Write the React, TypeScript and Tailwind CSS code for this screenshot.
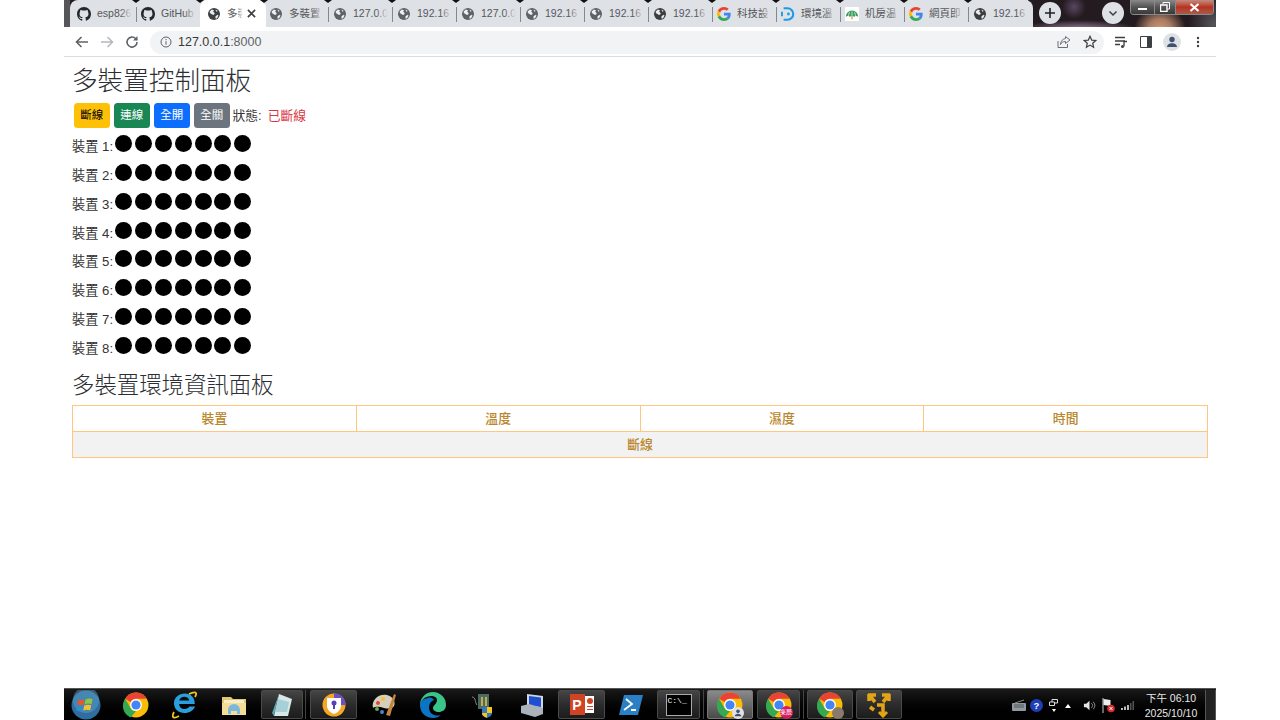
import React from "react";

const FONT = "font-['Liberation_Sans','Noto_Sans_CJK_TC',sans-serif]";

function Globe({ dark = false }: { dark?: boolean }) {
  const c = dark ? "#3c4043" : "#5f6368";
  return (
    <svg width="12" height="12" viewBox="0 0 16 16" className="shrink-0">
      <circle cx="8" cy="8" r="8" fill={c} />
      <path d="M2 5l3-3 3 1-1 2 2 2-1 2H6L3 7zM10 11l3-2 1 1-2 4-2 0zM10 2l3 2-2 1z" fill="#fff" fillOpacity="0.9" />
    </svg>
  );
}

function Github() {
  return (
    <svg width="14" height="14" viewBox="0 0 16 16" className="shrink-0" fill="#24292f">
      <path d="M8 0C3.58 0 0 3.58 0 8c0 3.54 2.29 6.53 5.47 7.59.4.07.55-.17.55-.38 0-.19-.01-.82-.01-1.49-2.01.37-2.53-.49-2.69-.94-.09-.23-.48-.94-.82-1.13-.28-.15-.68-.52-.01-.53.63-.01 1.08.58 1.23.82.72 1.21 1.87.87 2.33.66.07-.52.28-.87.51-1.07-1.78-.2-3.64-.89-3.64-3.95 0-.87.31-1.59.82-2.15-.08-.2-.36-1.02.08-2.12 0 0 .67-.21 2.2.82.64-.18 1.32-.27 2-.27s1.36.09 2 .27c1.53-1.04 2.2-.82 2.2-.82.44 1.1.16 1.92.08 2.12.51.56.82 1.27.82 2.15 0 3.07-1.87 3.75-3.65 3.95.29.25.54.73.54 1.48 0 1.07-.01 1.93-.01 2.2 0 .21.15.46.55.38A8.01 8.01 0 0 0 16 8c0-4.42-3.58-8-8-8z" />
    </svg>
  );
}

function GoogleG() {
  return (
    <svg width="14" height="14" viewBox="0 0 48 48" className="shrink-0">
      <path fill="#EA4335" d="M24 9.5c3.5 0 6.7 1.2 9.2 3.6l6.9-6.9C35.9 2.4 30.5 0 24 0 14.6 0 6.5 5.4 2.6 13.2l8 6.2C12.5 13.7 17.8 9.5 24 9.5z" />
      <path fill="#4285F4" d="M47 24.5c0-1.6-.1-3.1-.4-4.5H24v9h12.900c-.6 3-2.200 5.500-4.800 7.200l7.700 6c4.500-4.200 7.200-10.300 7.200-17.700z" />
      <path fill="#FBBC05" d="M10.600 28.600c-.5-1.400-.8-3-.8-4.600s.3-3.200.8-4.600l-8-6.200C.9 16.500 0 20.100 0 24s.9 7.500 2.600 10.800z" />
      <path fill="#34A853" d="M24 48c6.500 0 11.900-2.100 15.900-5.800l-7.700-6c-2.200 1.500-4.900 2.300-8.200 2.300-6.200 0-11.500-4.200-13.400-9.900l-8 6.200C6.500 42.600 14.600 48 24 48z" />
    </svg>
  );
}

function DLogo() {
  return (
    <svg width="14" height="14" viewBox="0 0 16 16" className="shrink-0" fill="none">
      <path d="M3 1.500h4.500a6.500 6.500 0 0 1 0 13H3" stroke="#1e9be8" strokeWidth="2.400" />
      <circle cx="8.500" cy="8" r="1.600" fill="#1e9be8" />
      <path d="M1 5.500v5" stroke="#1e9be8" strokeWidth="2.400" />
    </svg>
  );
}

function Umbrella() {
  return (
    <svg width="14" height="14" viewBox="0 0 16 16" className="shrink-0">
      <rect width="16" height="16" fill="#fff" />
      <path d="M1 11a7 7 0 0 1 14 0l-2.500-1-2 1-2.500-1-2.500 1-2-1z" fill="#3a9c5f" />
      <path d="M8 5v5M5 6l-1 4M11 6l1 4" stroke="#fff" strokeWidth="0.800" />
      <path d="M8 10v4" stroke="#e0a030" strokeWidth="1.500" />
    </svg>
  );
}

type Tab = { icon: React.ReactNode; label: string; active?: boolean };

const tabs: Tab[] = [
  { icon: <Github />, label: "esp826" },
  { icon: <Github />, label: "GitHub" },
  { icon: <Globe dark />, label: "多裝", active: true },
  { icon: <Globe />, label: "多裝置" },
  { icon: <Globe />, label: "127.0.0" },
  { icon: <Globe />, label: "192.16" },
  { icon: <Globe />, label: "127.0.0" },
  { icon: <Globe />, label: "192.16" },
  { icon: <Globe />, label: "192.16" },
  { icon: <Globe dark />, label: "192.16" },
  { icon: <GoogleG />, label: "科技設" },
  { icon: <DLogo />, label: "環境溫" },
  { icon: <Umbrella />, label: "机房温" },
  { icon: <GoogleG />, label: "網頁即" },
  { icon: <Globe dark />, label: "192.16" },
];

function ChromeTab({ tab, index }: { tab: Tab; index: number }) {
  const showSep = !tab.active && index > 0 && !tabs[index - 1].active;
  return (
    <div
      className={`relative flex h-[27px] shrink-0 items-center ${
        tab.active ? "z-10 -mr-[2px] w-[66px] rounded-t-lg bg-white pl-[7px]" : "w-16 pl-[5px]"
      }`}
    >
      {showSep && <div className="absolute left-0 top-[7px] h-[15px] w-px bg-[#85888c]" />}
      {index > 0 && (
        <div className="absolute -left-[4px] top-0 z-20 h-0 w-0 border-x-[4px] border-t-[3px] border-x-transparent border-t-[#111]" />
      )}
      <div className="flex w-[14px] shrink-0 justify-center">{tab.icon}</div>
      <div
        className={`relative ml-[6px] overflow-hidden whitespace-nowrap text-[10.500px] leading-[27px] text-[#55575a] ${FONT} ${
          tab.active ? "w-[22px]" : "w-[35px]"
        }`}
      >
        {tab.label}
        <div
          className={`absolute right-0 top-0 h-full w-[12px] bg-gradient-to-r ${
            tab.active ? "from-white/0 via-white to-white" : "from-[#dee1e6]/0 to-[#dee1e6]"
          }`}
        />
      </div>
      {tab.active && (
        <svg className="absolute left-[47px] top-[9px]" width="9" height="9" viewBox="0 0 10 10" stroke="#3c4043" strokeWidth="1.800">
          <path d="M1 1l8 8M9 1l-8 8" />
        </svg>
      )}
    </div>
  );
}

function Toolbar() {
  return (
    <div className="flex h-[29px] items-center bg-white pt-[1px]">
      <div className="ml-[10px] flex w-[76px] items-center gap-[9px]">
        <svg width="16" height="16" viewBox="0 0 16 16" fill="none" stroke="#5f6368" strokeWidth="1.600">
          <path d="M14 8H2.500M7.500 3l-5 5 5 5" />
        </svg>
        <svg width="16" height="16" viewBox="0 0 16 16" fill="none" stroke="#b4b7bb" strokeWidth="1.500">
          <path d="M2 8h11.500M8.500 3l5 5-5 5" />
        </svg>
        <svg width="16" height="16" viewBox="0 0 16 16" fill="none" stroke="#5f6368" strokeWidth="1.600">
          <path d="M13 8a5 5 0 1 1-1.500-3.500L13 6" />
          <path d="M13.500 2v4.500H9" fill="#5f6368" stroke="none" />
        </svg>
      </div>
      <div className="flex h-[23px] w-[954px] items-center rounded-full bg-[#f1f3f4] pl-[10px]">
        <svg width="12" height="12" viewBox="0 0 12 12" fill="none" stroke="#5f6368" strokeWidth="1">
          <circle cx="6" cy="6" r="5" />
          <path d="M6 5.200v3.500M6 3v1.200" />
        </svg>
        <span className={`ml-[6px] text-[12.500px] text-[#35373a] ${FONT}`}>
          127.0.0.1<span className="text-[#5f6368]">:8000</span>
        </span>
        <div className="ml-auto mr-[7px] flex items-center gap-[12px]">
          <svg width="14" height="14" viewBox="0 0 14 14" fill="none" stroke="#6b6e72" strokeWidth="1">
            <path d="M1 6v6.500h9.500V9" />
            <path d="M8.500 1.500L13 5 8.500 8.500V6.500C6 6.500 4.500 7.500 3.500 9.500 3.500 6.500 5.500 3.800 8.500 3.500z" />
          </svg>
          <svg width="14" height="14" viewBox="0 0 14 14" fill="none" stroke="#3c4043" strokeWidth="1.200">
            <path d="M7 1.300l1.700 3.800 4 .4-3 2.700.9 4L7 10.100l-3.600 2.100.9-4-3-2.700 4-.4z" />
          </svg>
        </div>
      </div>
      <div className="ml-[10px] flex items-center">
        <svg width="14" height="14" viewBox="0 0 14 14" fill="none" stroke="#3c4043" strokeWidth="1.300">
          <path d="M1 2.500h10M1 6h10M1 9.500h5" />
          <path d="M10 11.500V6.500h3" />
          <circle cx="8.500" cy="11.500" r="1.500" fill="#3c4043" stroke="none" />
        </svg>
        <svg className="ml-[12px]" width="12" height="12" viewBox="0 0 12 12">
          <path d="M.500.500h11v11H.500z" fill="#fff" stroke="#3c4043" />
          <rect x="7" y="1" width="4.500" height="10" fill="#3c4043" />
        </svg>
        <div className="ml-[11px] flex h-[18px] w-[18px] items-center justify-center rounded-full bg-[#dee1e6]">
          <svg width="12" height="12" viewBox="0 0 12 12" fill="#42526e">
            <circle cx="6" cy="3.500" r="2.700" />
            <path d="M1 11c0-2.500 2.500-3.800 5-3.800s5 1.300 5 3.800z" />
          </svg>
        </div>
        <svg className="ml-[15px]" width="4" height="12" viewBox="0 0 4 12" fill="#3c4043">
          <circle cx="2" cy="2" r="1.200" />
          <circle cx="2" cy="6" r="1.200" />
          <circle cx="2" cy="10" r="1.200" />
        </svg>
      </div>
    </div>
  );
}

function TabStrip() {
  return (
    <div className="relative flex h-[27px] overflow-hidden bg-[#231b20]">
      <div className="absolute inset-0 bg-[radial-gradient(ellipse_26px_24px_at_1096px_30px,#d99a6c_0,#a87a62_45%,transparent_100%),radial-gradient(ellipse_60px_10px_at_1015px_30px,#a58aa8_0,transparent_100%),radial-gradient(circle_at_1010px_7px,#5a4660_0,transparent_12px),radial-gradient(ellipse_26px_30px_at_1150px_24px,#55555a_0,transparent_100%)]" />
      <div className="relative w-[6px] bg-[#55555a]" />
      <div className="relative flex h-[27px] w-[963px] shrink-0 rounded-t-lg bg-[#dee1e6] pl-[2px]">
        {tabs.map((t, i) => (
          <ChromeTab key={i} tab={t} index={i} />
        ))}
      </div>
      <div className="relative ml-[6px] mt-[2px] flex h-[22px] w-[22px] items-center justify-center rounded-full bg-[#dee1e6]">
        <svg width="12" height="12" viewBox="0 0 12 12" stroke="#202124" strokeWidth="1.600">
          <path d="M6 1v10M1 6h10" />
        </svg>
      </div>
      <div className="relative ml-[41px] mt-[2px] flex h-[22px] w-[22px] items-center justify-center rounded-full bg-[#dee1e6]">
        <svg width="10" height="10" viewBox="0 0 10 10" fill="none" stroke="#3c4043" strokeWidth="1.500">
          <path d="M1.500 3.500L5 7l3.500-3.500" />
        </svg>
      </div>
      <div className="relative ml-[6px] flex h-[15px] w-[84px] overflow-hidden rounded-b-[4px] border border-t-0 border-[#8a8a8a]">
        <div className="flex w-[24px] items-center justify-center border-r border-[#8a8a8a] bg-gradient-to-b from-[#8a8a8a] via-[#555] to-[#3a3a3a]">
          <div className="mt-[4px] h-[2px] w-[9px] bg-white" />
        </div>
        <div className="relative flex w-[21px] items-center justify-center border-r border-[#8a8a8a] bg-gradient-to-b from-[#8a8a8a] via-[#555] to-[#3a3a3a]">
          <svg width="10" height="10" viewBox="0 0 10 10" fill="none" stroke="#fff">
            <path d="M3 2.500V.5h6.500v6.500H7.500" />
            <path d="M.5 3h6.500v6.500H.5z" strokeWidth="1.400" />
          </svg>
        </div>
        <div className="flex flex-1 items-center justify-center bg-gradient-to-b from-[#c08a80] via-[#b8301f] to-[#a85a48]">
          <svg width="11" height="9" viewBox="0 0 11 9" stroke="#fff" strokeWidth="2.200">
            <path d="M1.500 1l8 7M9.500 1l-8 7" />
          </svg>
        </div>
      </div>
    </div>
  );
}

function Dot() {
  return <span className="inline-block h-[17px] w-[17px] rounded-full bg-black" />;
}

function DeviceRow({ n }: { n: number }) {
  return (
    <div className="flex h-[28.860px] items-start">
      <span className="mt-[3px] w-[43px] whitespace-nowrap text-[13.200px] leading-[18px] text-[#333]">
        裝置 {n}:
      </span>
      <div className="flex gap-[2.900px]">
        {Array.from({ length: 7 }).map((_, i) => (
          <Dot key={i} />
        ))}
      </div>
    </div>
  );
}

function Btn({ label, cls }: { label: string; cls: string }) {
  return (
    <button className={`h-[25px] w-[36.500px] rounded-[3.500px] pt-[1px] text-[11.500px] ${cls}`}>{label}</button>
  );
}

function Th({ label }: { label: string }) {
  return (
    <div className="flex flex-1 items-center justify-center border-r border-[#ffc680] text-[12.800px] font-medium text-[#b8862b] last:border-r-0">
      {label}
    </div>
  );
}

function ChromeIcon({ badge }: { badge?: React.ReactNode }) {
  return (
    <div className="relative h-[26px] w-[26px]">
      <svg width="26" height="26" viewBox="0 0 48 48">
        <circle cx="24" cy="24" r="23" fill="#fbbc05" />
        <path d="M24 1a23 23 0 0 1 20 11.500H24a11.500 11.500 0 0 0-10 5.800L4.100 12.500A23 23 0 0 1 24 1z" fill="#ea4335" />
        <path d="M4.100 12.500L14 30a11.500 11.500 0 0 0 10 5.500L14 47A23 23 0 0 1 4.100 12.500z" fill="#34a853" />
        <circle cx="24" cy="24" r="11" fill="#fff" />
        <circle cx="24" cy="24" r="8.500" fill="#4285f4" />
      </svg>
      {badge}
    </div>
  );
}

function Slot({ w, on, bright, children }: { w: number; on?: boolean; bright?: boolean; children: React.ReactNode }) {
  return (
    <div
      style={{ width: w }}
      className={`mt-[1px] flex h-[29px] shrink-0 items-center justify-center rounded-[2px] ${
        on
          ? bright
            ? "border border-[#777] bg-gradient-to-b from-[#8a8a8a] via-[#6a6a6a] to-[#4a4a4a]"
            : "border border-[#4a4a4a] bg-gradient-to-b from-[#454545] via-[#2c2c2c] to-[#1c1c1c]"
          : ""
      }`}
    >
      {children}
    </div>
  );
}

function Taskbar() {
  return (
    <div className="flex h-8 items-start border-t border-t-[#555] bg-gradient-to-b from-[#1a1a1a] via-[#050505] to-black">
      <div className="flex h-[31px] w-[43px] shrink-0 items-center justify-center">
        <svg width="30" height="30" viewBox="0 0 30 30">
          <circle cx="15" cy="15" r="14.500" fill="#2d6d9f" />
          <circle cx="15" cy="10" r="13" fill="#5fa0c8" fillOpacity="0.5" />
          <path d="M7.500 9.500c2 1 3.500 1 6 .2l-1 5c-2 .7-4 .7-6-.2z" fill="#e8562a" />
          <path d="M14.500 9.400c2.500-1 4.500-1 7-.2l-1 5c-2.500-.8-4.500-.8-7 .2z" fill="#8ec63f" />
          <path d="M6.200 15.500c2 .9 4 .9 6 .2l-1 5c-2 .7-4 .7-6-.2z" fill="#2f8ed0" />
          <path d="M13.200 15.500c2.500-1 4.500-1 7-.2l-1 5c-2.500-.8-4.500-.8-7 .2z" fill="#f6c12e" />
        </svg>
      </div>
      <Slot w={57}><ChromeIcon /></Slot>
      <Slot w={42}>
        <svg width="30" height="28" viewBox="0 0 30 28">
          <path d="M22 13H9c.3 3 2.500 5 5.500 5 2.200 0 4-1 5-2.500h5.500c-1.500 4-5.500 6.500-10.500 6.500-6 0-10.500-4-10.500-9.800S9 2.500 15 2.500c5.500 0 10 4 9.800 10.500zM9.300 9.500h10c-.3-2.400-2.300-3.800-5-3.800s-4.500 1.500-5 3.800z" fill="#2a9fe0" />
          <path d="M4 21C1 27 4 28 9 25M25 6c3-5 0-6-6-3" fill="none" stroke="#f5c518" strokeWidth="1.800" />
        </svg>
      </Slot>
      <Slot w={55}>
        <svg width="26" height="24" viewBox="0 0 26 24">
          <path d="M1 4h9l2 2h13v16H1z" fill="#e2c670" />
          <path d="M3 7h20v4H3z" fill="#f7eec8" />
          <path d="M1 10h24v12H1z" fill="#f4dd94" />
          <path d="M7 21v-4a6 6 0 0 1 12 0v4h-3v-3h-6v3z" fill="#7db7dd" />
        </svg>
      </Slot>
      <Slot w={42} on>
        <svg width="24" height="24" viewBox="0 0 24 24">
          <path d="M9 1l13 5-4 17H4z" fill="#d8e8e8" />
          <path d="M9 1L4 23l-2-3z" fill="#5fa3ad" />
          <path d="M8 6l11 3-2 10H5z" fill="#a6d0d6" />
        </svg>
      </Slot>
      <div className="ml-[2px] mr-[4px] mt-[1px] h-[29px] w-px bg-[#444]" />
      <Slot w={47} on>
        <svg width="24" height="24" viewBox="0 0 24 24">
          <circle cx="12" cy="12" r="11.500" fill="#f5a623" />
          <path d="M12 .5A11.500 11.500 0 0 1 23.500 12H19a7 7 0 0 0-7-7z" fill="#6a4fc8" />
          <path d="M5 5h14v8c0 4-4 7-7 8-3-1-7-4-7-8z" fill="#fff" />
          <circle cx="12" cy="10" r="2.500" fill="#5b3fb5" />
          <path d="M11 11h2v5h-2z" fill="#5b3fb5" />
        </svg>
      </Slot>
      <Slot w={51}>
        <svg width="28" height="27" viewBox="0 0 28 27">
          <path d="M4 17C2 9 10 2 18 4c6 1.500 9 7 7 11-2 3-6 3-10 2-4-1-8-2-11 0z" fill="#d6cfbb" />
          <circle cx="9" cy="12" r="2" fill="#e3463f" />
          <circle cx="14" cy="8" r="2" fill="#f2c230" />
          <circle cx="8" cy="18" r="2" fill="#62a84d" />
          <circle cx="13" cy="21" r="2" fill="#4a85c9" />
          <path d="M17 24L25 3l2 1-6 21z" fill="#c4863b" />
        </svg>
      </Slot>
      <Slot w={50}>
        <svg width="28" height="28" viewBox="0 0 28 28">
          <path d="M14 1a13 13 0 0 1 13 13c0 5-4 7-7 7-4 0-6-2-6-4 0-3 4-4 4-8 0-2-2-4-6-4-5 0-11 4-11 10a13 13 0 0 1 13-14z" fill="#39c48a" />
          <path d="M1 14c0 8 6 13 13 13 3 0 6-1 8-3-6 2-12-1-12-8 0-3 2-6 5-7-1-2-4-3-6-2C4 8 1 10 1 14z" fill="#0c74c4" />
        </svg>
      </Slot>
      <Slot w={50}>
        <svg width="26" height="28" viewBox="0 0 26 28">
          <path d="M8 3h11v15H8z" fill="#4a6d63" />
          <path d="M11 6h2v9h-2zM15 6h2v9h-2z" fill="#c9a94e" />
          <path d="M2 6c4 0 3 6 5 8" stroke="#888" fill="none" />
          <path d="M12 16h10v6c0 3-3 4-5 5-2-1-5-2-5-5z" fill="#3579c6" />
          <path d="M17 16h5v6h-5zM12 22h5v5c-2-1-5-2-5-5z" fill="#f5c518" />
        </svg>
      </Slot>
      <Slot w={47}>
        <svg width="26" height="26" viewBox="0 0 26 26">
          <path d="M8 2l16 2v13l-16-2z" fill="#cfd8e3" />
          <path d="M10 4l12 1.500v9.500l-12-1.500z" fill="#1f4fd0" />
          <path d="M2 14l8-2 14 4v6l-8 3-14-4z" fill="#aab2bc" />
        </svg>
      </Slot>
      <div className="w-[3px] shrink-0" />
      <Slot w={47} on>
        <div className="relative flex h-[21px] w-[24px] items-center">
          <div className="absolute right-0 top-[2px] h-[17px] w-[16px] bg-white">
            <div className="absolute right-[1px] top-[2px] h-[6px] w-[6px] rounded-full bg-[#d04423]" />
            <div className="absolute bottom-[3px] right-[1px] h-[1px] w-[6px] bg-[#d04423]" />
            <div className="absolute bottom-[6px] right-[1px] h-[1px] w-[6px] bg-[#d04423]" />
          </div>
          <div className="relative flex h-[21px] w-[15px] items-center justify-center bg-[#d04423]">
            <span className="font-['Liberation_Sans',sans-serif] text-[14px] font-bold leading-none text-white">P</span>
          </div>
        </div>
      </Slot>
      <Slot w={52}>
        <svg width="24" height="22" viewBox="0 0 24 22">
          <path d="M5 1h19l-5 20H0z" fill="#2b7fc4" />
          <path d="M7 5l6 5-8 6M12 16h5" fill="none" stroke="#fff" strokeWidth="1.800" />
        </svg>
      </Slot>
      <Slot w={43} on>
        <div className="flex h-[20px] w-[24px] items-start bg-black px-[1px] ring-1 ring-[#aaa]">
          <span className="font-['Liberation_Mono',monospace] text-[8px] leading-[11px] text-white">C:\_</span>
        </div>
      </Slot>
      <div className="ml-[3px] mr-[3px] mt-[1px] h-[29px] w-px bg-[#444]" />
      <Slot w={46} on bright>
        <ChromeIcon
          badge={
            <div className="absolute -bottom-[1px] -right-[1px] flex h-[12px] w-[12px] items-center justify-center rounded-full bg-[#dfe1e5]">
              <svg width="8" height="8" viewBox="0 0 12 12" fill="#42526e">
                <circle cx="6" cy="3.500" r="2.700" />
                <path d="M1 11c0-2.500 2.500-3.800 5-3.800s5 1.300 5 3.800z" />
              </svg>
            </div>
          }
        />
      </Slot>
      <div className="w-[4px] shrink-0" />
      <Slot w={43} on>
        <ChromeIcon
          badge={
            <div className={`absolute -bottom-[1px] -right-[1px] flex h-[13px] w-[13px] items-center justify-center rounded-full bg-[#d81b60] text-[6px] leading-none text-white ${FONT}`}>
              楽辰
            </div>
          }
        />
      </Slot>
      <div className="ml-[3px] mr-[3px] mt-[1px] h-[29px] w-px bg-[#444]" />
      <Slot w={46} on>
        <ChromeIcon
          badge={
            <div className="absolute -bottom-[1px] -right-[1px] h-[12px] w-[12px] rounded-full bg-[#8a7a6a]" />
          }
        />
      </Slot>
      <div className="w-[3px] shrink-0" />
      <Slot w={46} on>
        <svg width="26" height="26" viewBox="0 0 26 26" fill="none" stroke="#e3a514" strokeWidth="3.500">
          <path d="M2 3h8M3 2v7M3.500 3.500L9 10" />
          <path d="M24 3h-8M23 2v7M22.500 3.500L17 10" />
          <path d="M11 13h6v10" />
          <path d="M13 20l4 4 4-4" strokeWidth="3" />
          <path d="M4 15l4 3" />
        </svg>
      </Slot>
      <div className="mt-[1px] flex h-[31px] flex-1 items-center pl-[110px]">
        <svg className="shrink-0" width="15" height="13" viewBox="0 0 15 13">
          <rect y="4" width="14" height="8" rx="1" fill="#8e9aa0" />
          <path d="M3 4l9-3" stroke="#888" />
          <path d="M2 6h10M2 8h10" stroke="#555" />
        </svg>
        <svg className="ml-[3px] shrink-0" width="13" height="13" viewBox="0 0 13 13">
          <circle cx="6.500" cy="6.500" r="6.500" fill="#1f3fb8" />
          <text x="6.500" y="10" textAnchor="middle" fontSize="9.500" fontWeight="700" fill="#fff" fontFamily="Liberation Sans">?</text>
        </svg>
        <div className="ml-[6px] flex w-[9px] shrink-0 flex-col items-center gap-[3px]">
          <svg width="9" height="7" viewBox="0 0 9 7" fill="none" stroke="#ddd">
            <path d="M.500 3h5v3.500h-5zM3 3V.500h5.500v3.500H6" />
          </svg>
          <div className="h-0 w-0 border-x-[2.500px] border-t-[3px] border-x-transparent border-t-white" />
        </div>
        <div className="ml-[7px] h-0 w-0 shrink-0 border-x-[3px] border-b-[4px] border-x-transparent border-b-white" />
        <svg className="ml-[12px] shrink-0" width="13" height="13" viewBox="0 0 14 13">
          <path d="M1 4.500h2.500L7 1.500v10L3.500 8.500H1z" fill="#e6e6e6" />
          <path d="M9 4a3 3 0 0 1 0 5M11 2.500a6 6 0 0 1 0 8" fill="none" stroke="#999" />
        </svg>
        <svg className="ml-[6px] shrink-0" width="13" height="15" viewBox="0 0 13 15">
          <path d="M1 0v15" stroke="#ccc" />
          <path d="M1.500 1l7 1v6l-7-1z" fill="#eee" />
          <circle cx="9" cy="10.500" r="3.800" fill="#d92b2b" />
          <path d="M7.500 9l3 3M10.500 9l-3 3" stroke="#fff" />
        </svg>
        <svg className="ml-[6px] shrink-0" width="13" height="9" viewBox="0 0 13 9" fill="#bbb">
          <rect x="0" y="7" width="2" height="2" />
          <rect x="3" y="5.500" width="2" height="3.500" />
          <rect x="6" y="4" width="2" height="5" />
          <rect x="9" y="2" width="1.500" height="7" fill="#555" />
          <rect x="11.500" y="0" width="1.500" height="9" fill="#555" />
        </svg>
        <div className={`ml-[9px] w-[56px] shrink-0 text-center text-[10.500px] leading-[15px] text-[#e8e8e8] ${FONT}`}>
          <div>下午 06:10</div>
          <div className="whitespace-nowrap">2025/10/10</div>
        </div>
        <div className="ml-[6px] h-[31px] w-[11px] shrink-0 border-x border-[#555] bg-[#222]" />
      </div>
    </div>
  );
}

export default function App() {
  return (
    <div className={`flex h-[720px] w-[1280px] justify-center overflow-hidden bg-white ${FONT}`}>
      <div className="flex h-full w-[1152px] flex-col bg-white">
        <TabStrip />
        <Toolbar />
        <div className="h-px bg-[#dadce0]" />
        <main className="flex-1 px-2 text-[#2b2f33]">
          <h1 className="mt-[9px] text-[25.600px] font-light leading-[31px]">多裝置控制面板</h1>
          <div className="mt-[6px] flex items-center">
            <div className="ml-[1.500px] flex gap-[3.500px]">
              <Btn label="斷線" cls="bg-[#ffc107] text-black" />
              <Btn label="連線" cls="bg-[#198754] text-white" />
              <Btn label="全開" cls="bg-[#0d6efd] text-white" />
              <Btn label="全關" cls="bg-[#6c757d] text-white" />
            </div>
            <span className="ml-[2.500px] text-[12.800px] text-[#333]">狀態:</span>
            <span className="ml-[6px] text-[12.800px] text-[#dc3545]">已斷線</span>
          </div>
          <div className="mt-[7px]">
            {[1, 2, 3, 4, 5, 6, 7, 8].map((n) => (
              <DeviceRow key={n} n={n} />
            ))}
          </div>
          <h2 className="mt-[6px] text-[22.400px] font-light leading-[27px]">多裝置環境資訊面板</h2>
          <div className="mt-[6px] border border-[#ffc680]">
            <div className="flex h-[26px] border-b border-[#ffc680]">
              <Th label="裝置" />
              <Th label="溫度" />
              <Th label="濕度" />
              <Th label="時間" />
            </div>
            <div className="flex h-[25px] items-center justify-center bg-[#f2f2f2] text-[12.800px] font-medium text-[#b8862b]">
              斷線
            </div>
          </div>
        </main>
        <Taskbar />
      </div>
    </div>
  );
}
